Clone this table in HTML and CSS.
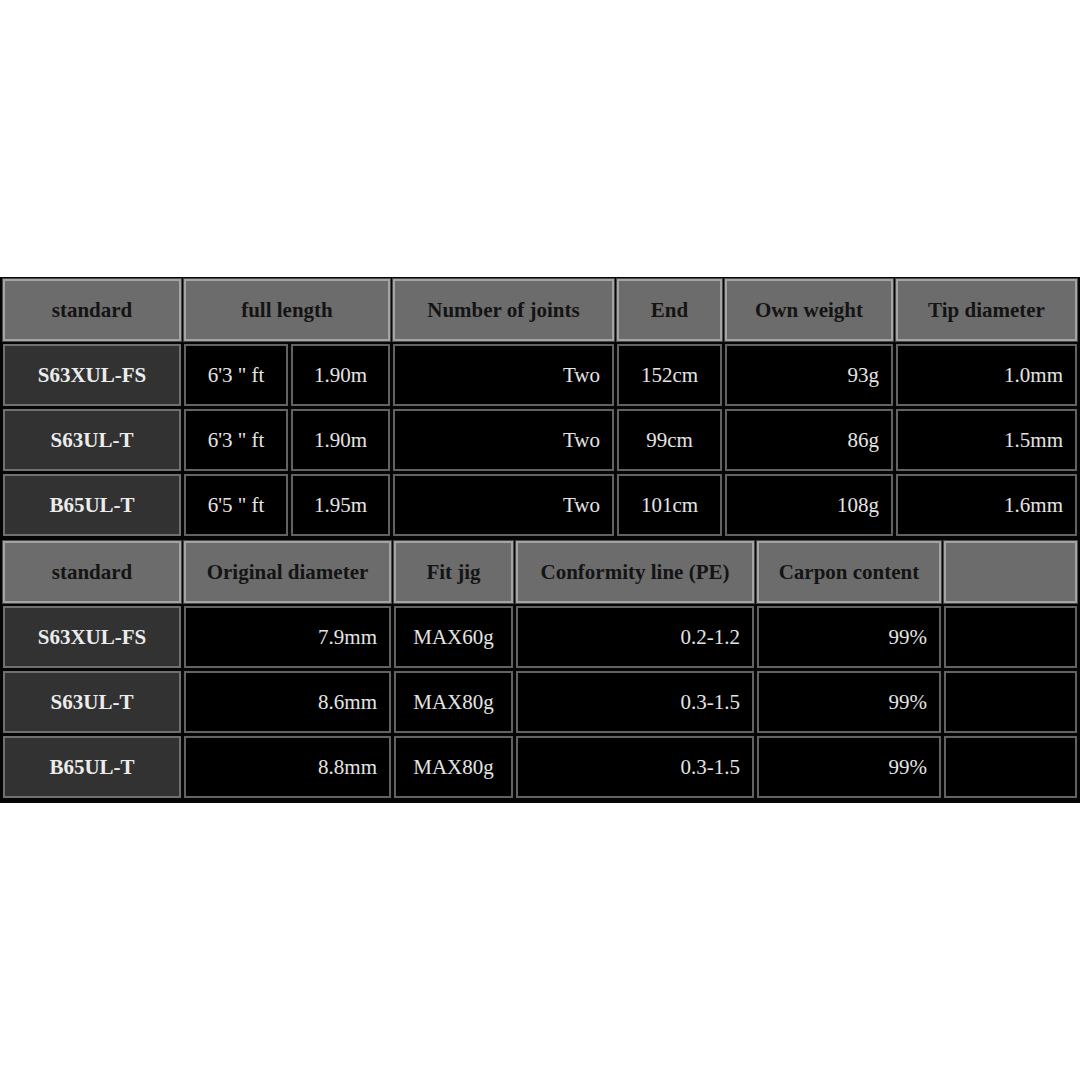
FILE: index.html
```html
<!DOCTYPE html>
<html>
<head>
<meta charset="utf-8">
<link rel="stylesheet" href="styles.css">
</head>
<body>
<div class="page">
  <div class="sheet">
    <div class="grid grid-a">
      <div class="cell head">standard</div>
      <div class="cell head span2">full length</div>
      <div class="cell head">Number of joints</div>
      <div class="cell head">End</div>
      <div class="cell head">Own weight</div>
      <div class="cell head">Tip diameter</div>

      <div class="cell model">S63XUL-FS</div>
      <div class="cell data">6'3 " ft</div>
      <div class="cell data">1.90m</div>
      <div class="cell data right">Two</div>
      <div class="cell data">152cm</div>
      <div class="cell data right">93g</div>
      <div class="cell data right">1.0mm</div>

      <div class="cell model">S63UL-T</div>
      <div class="cell data">6'3 " ft</div>
      <div class="cell data">1.90m</div>
      <div class="cell data right">Two</div>
      <div class="cell data">99cm</div>
      <div class="cell data right">86g</div>
      <div class="cell data right">1.5mm</div>

      <div class="cell model">B65UL-T</div>
      <div class="cell data">6'5 " ft</div>
      <div class="cell data">1.95m</div>
      <div class="cell data right">Two</div>
      <div class="cell data">101cm</div>
      <div class="cell data right">108g</div>
      <div class="cell data right">1.6mm</div>
    </div>

    <div class="grid grid-b">
      <div class="cell head">standard</div>
      <div class="cell head">Original diameter</div>
      <div class="cell head">Fit jig</div>
      <div class="cell head">Conformity line (PE)</div>
      <div class="cell head">Carpon content</div>
      <div class="cell head"></div>

      <div class="cell model">S63XUL-FS</div>
      <div class="cell data right">7.9mm</div>
      <div class="cell data">MAX60g</div>
      <div class="cell data right">0.2-1.2</div>
      <div class="cell data right">99%</div>
      <div class="cell data"></div>

      <div class="cell model">S63UL-T</div>
      <div class="cell data right">8.6mm</div>
      <div class="cell data">MAX80g</div>
      <div class="cell data right">0.3-1.5</div>
      <div class="cell data right">99%</div>
      <div class="cell data"></div>

      <div class="cell model">B65UL-T</div>
      <div class="cell data right">8.8mm</div>
      <div class="cell data">MAX80g</div>
      <div class="cell data right">0.3-1.5</div>
      <div class="cell data right">99%</div>
      <div class="cell data"></div>
    </div>
  </div>
</div>
</body>
</html>
```

FILE: styles.css
```css
html, body {
  margin: 0;
  padding: 0;
  background: #ffffff;
}

.page {
  width: 1080px;
  height: 1080px;
  display: flex;
  flex-direction: column;
  justify-content: center;
}

.sheet {
  background: #050505;
  padding: 2px 3px 5px 3px;
  display: flex;
  flex-direction: column;
  gap: 5px;
  font-family: "Liberation Serif", "Times New Roman", serif;
  font-size: 21px;
}

.grid {
  display: grid;
  gap: 3px;
  grid-auto-rows: 62px;
}

.grid-a {
  grid-template-columns: 178px 104px 99px 221px 105px 168px 181px;
}

.grid-b {
  grid-template-columns: 178px 207px 119px 238px 184px 133px;
}

.cell {
  box-sizing: border-box;
  display: flex;
  align-items: center;
  justify-content: center;
  border: 2px solid #5f5f5f;
  white-space: nowrap;
}

.span2 {
  grid-column: span 2;
}

.head {
  background: #6c6c6c;
  border-color: #a4a4a4;
  box-shadow: 0 0 0 1px #4a4a4a;
  color: #141414;
  font-weight: bold;
}

.model {
  background: #323232;
  border-color: #707070;
  color: #ececec;
  font-weight: bold;
}

.data {
  background: #000000;
  border-color: #626262;
  color: #e4e4e4;
}

.right {
  justify-content: flex-end;
  padding-right: 12px;
}
```
